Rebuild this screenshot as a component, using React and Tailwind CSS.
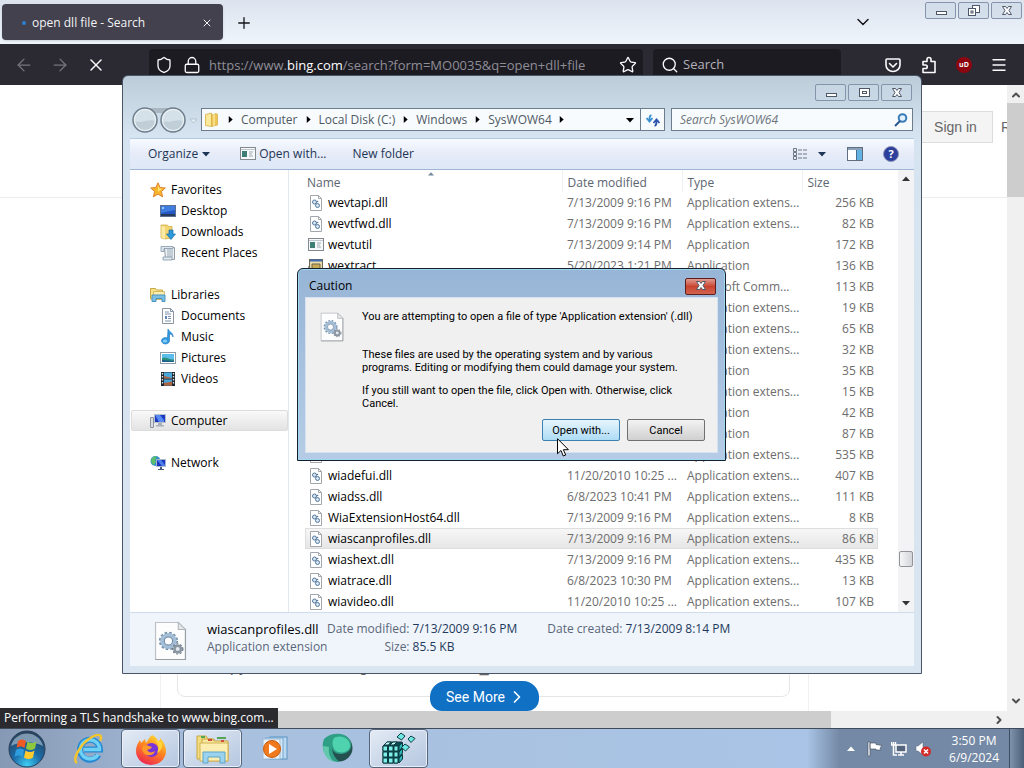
import {
  ArrowLeft,
  ArrowRight,
  ChevronDown,
  ChevronRight,
  ChevronUp,
  Lock,
  Menu,
  Plus,
  Search,
  Shield,
  Star,
  X,
} from 'lucide-react'

const files = [
  ['dll', 'wevtapi.dll', '7/13/2009 9:16 PM', 'Application extens...', '256 KB'],
  ['dll', 'wevtfwd.dll', '7/13/2009 9:16 PM', 'Application extens...', '82 KB'],
  ['exe', 'wevtutil', '7/13/2009 9:14 PM', 'Application', '172 KB'],
  ['cab', 'wextract', '5/20/2023 1:21 PM', 'Application', '136 KB'],
  ['exe', 'WF', '6/10/2009 1:38 PM', 'Microsoft Comm...', '113 KB'],
  ['dll', 'wfapigp.dll', '7/13/2009 9:16 PM', 'Application extens...', '19 KB'],
  ['dll', 'WfHC.dll', '7/13/2009 9:16 PM', 'Application extens...', '65 KB'],
  ['dll', 'whealogr.dll', '7/13/2009 9:16 PM', 'Application extens...', '32 KB'],
  ['exe', 'where', '7/13/2009 9:14 PM', 'Application', '35 KB'],
  ['dll', 'whhelper.dll', '7/13/2009 9:16 PM', 'Application extens...', '15 KB'],
  ['exe', 'whoami', '7/13/2009 9:14 PM', 'Application', '42 KB'],
  ['exe', 'wiaacmgr', '7/13/2009 9:14 PM', 'Application', '87 KB'],
  ['dll', 'wiaaut.dll', '7/13/2009 9:16 PM', 'Application extens...', '535 KB'],
  ['dll', 'wiadefui.dll', '11/20/2010 10:25 ...', 'Application extens...', '407 KB'],
  ['dll', 'wiadss.dll', '6/8/2023 10:41 PM', 'Application extens...', '111 KB'],
  ['dll', 'WiaExtensionHost64.dll', '7/13/2009 9:16 PM', 'Application extens...', '8 KB'],
  ['dll', 'wiascanprofiles.dll', '7/13/2009 9:16 PM', 'Application extens...', '86 KB'],
  ['dll', 'wiashext.dll', '7/13/2009 9:16 PM', 'Application extens...', '435 KB'],
  ['dll', 'wiatrace.dll', '6/8/2023 10:30 PM', 'Application extens...', '13 KB'],
  ['dll', 'wiavideo.dll', '11/20/2010 10:25 ...', 'Application extens...', '107 KB'],
]

const places = [
  { label: 'Favorites', icon: <FavoritesIcon />, items: [['Desktop', <DesktopIcon />], ['Downloads', <DownloadsIcon />], ['Recent Places', <RecentIcon />]] },
  { label: 'Libraries', icon: <LibrariesIcon />, items: [['Documents', <DocumentsIcon />], ['Music', <MusicIcon />], ['Pictures', <PicturesIcon />], ['Videos', <VideosIcon />]] },
  { label: 'Computer', icon: <ComputerIcon />, items: [], selected: true },
  { label: 'Network', icon: <NetworkIcon />, items: [] },
]

function FavoritesIcon() {
  return (
    <svg className="size-4" viewBox="0 0 16 16">
      <path d="M8 .8l2.1 4.7 5.2.5-3.9 3.5 1.2 5.3L8 12.1l-4.6 2.7 1.2-5.3L.7 6l5.2-.5z" fill="#f9b52c" stroke="#d9822b" />
      <path d="M8 3l1.400 3.500 3 .3-4.400 3z" fill="#ffe27a" />
    </svg>
  )
}

function DesktopIcon() {
  return (
    <svg className="size-4" viewBox="0 0 16 16">
      <rect x=".5" y="2.500" width="15" height="11" fill="#2459c4" stroke="#5b6f8e" />
      <path d="M1 3h14v4L1 10z" fill="#3f7de0" />
      <rect x="1" y="11" width="14" height="2" fill="#27395c" />
      <rect x="2" y="4" width="2" height="2" fill="#9cc4f5" />
    </svg>
  )
}

function DownloadsIcon() {
  return (
    <svg className="size-4" viewBox="0 0 16 16">
      <path d="M1 1h6l2 1.500h3V14l-7 1-4-1z" fill="#f2d571" stroke="#c9a33b" strokeWidth=".7" />
      <path d="M5 3v12L1.500 14V2z" fill="#fbeaa5" />
      <path d="M9 6h4v4h2.500L11 15.500 6.500 10H9z" fill="#2c9ada" stroke="#1a6ba5" strokeWidth=".7" />
    </svg>
  )
}

function RecentIcon() {
  return (
    <svg className="size-4" viewBox="0 0 16 16">
      <path d="M4.500 2.500h10v12h-9z" fill="#eef2f5" stroke="#8f9ba6" />
      <path d="M7 5h6M7 7h6M7 9h6M7 11h6" stroke="#9aa9b7" />
      <path d="M1 1.500h12v2H4v3H1zM3 12h9v3H3z" fill="#dfe8ef" stroke="#8397a8" strokeWidth=".8" />
    </svg>
  )
}

function LibrariesIcon() {
  return (
    <svg className="size-4" viewBox="0 0 16 16">
      <path d="M.5 1.500h5l1 1.500h6v9H.5z" fill="#f7e38c" stroke="#c9a844" />
      <path d="M3.500 4.500h11v8h-11z" fill="#fbeeb0" stroke="#c9a844" strokeWidth=".7" />
      <path d="M2 14.500V8h13v6.500h-3v-3H6v3z" fill="#7cc0e6" stroke="#4a92c0" />
    </svg>
  )
}

function DocumentsIcon() {
  return (
    <svg className="size-4" viewBox="0 0 16 16">
      <path d="M2.500.5h8l3 3v12h-11z" fill="#fff" stroke="#8c96a0" />
      <path d="M10.500.5v3h3M5 4h4M5 6h6M8 8.500h3M8 10.500h3M5 13h6" stroke="#7c93ad" fill="none" />
      <path d="M5 8h2v3H5z" fill="#5c86b4" />
    </svg>
  )
}

function MusicIcon() {
  return (
    <svg className="size-4" viewBox="0 0 16 16">
      <path d="M8 0c1 3 5.500 3.500 5 8-.5-2-2-3-3.500-3L9.500 12a4 3.200 0 1 1-2-3z" fill="#2f9be2" stroke="#1d6fb4" strokeWidth=".6" />
      <ellipse cx="5" cy="12" rx="2.200" ry="1.500" fill="#86cbf5" />
    </svg>
  )
}

function PicturesIcon() {
  return (
    <svg className="size-4" viewBox="0 0 16 16">
      <rect x=".5" y="2.500" width="15" height="11" fill="#fff" stroke="#8e9aa5" />
      <rect x="2" y="4" width="12" height="8" fill="#5bbdec" />
      <path d="M2 8c4-2 7 2 12 1.500V12H2z" fill="#2b8f7b" />
      <path d="M2 10l12 1v1H2z" fill="#1d5f8c" />
    </svg>
  )
}

function VideosIcon() {
  return (
    <svg className="size-4" viewBox="0 0 16 16">
      <rect x="1" y="1" width="14" height="14" fill="#20262e" />
      <path d="M4 1.500h8v6H4zM4 8.500h8v6H4z" fill="#4ba6dc" />
      <path d="M4 5l8 2v.5H4zM4 12l8-1.500v4H4z" fill="#b0643c" />
      <path d="M2.500 2v12M13.500 2v12" stroke="#dfe8f0" strokeWidth="1.300" strokeDasharray="1.500 1.500" />
    </svg>
  )
}

function ComputerIcon() {
  return (
    <svg className="size-4" viewBox="0 0 16 16">
      <path d="M.5 4.500h3v10h-3z" fill="#d8dce2" stroke="#8d949e" />
      <path d="M4.500 1.500h11v8h-11z" fill="#1b39c4" stroke="#b6bfca" />
      <path d="M5 2h5l4 5v2H9z" fill="#5a8bf0" />
      <path d="M8 10h4v2h2v1.500H6V12h2z" fill="#a7afba" />
    </svg>
  )
}

function NetworkIcon() {
  return (
    <svg className="size-4" viewBox="0 0 16 16">
      <circle cx="5.500" cy="6" r="5" fill="#2e8bd0" />
      <path d="M2 3c2-2 4-2 5-1L5 5l1 2-2 3C2 9 1 7 1 5z" fill="#5cc06a" />
      <path d="M6.500 4.500h9v7h-9z" fill="#1a35bf" stroke="#aab8cd" />
      <path d="M7 5h4l4 5v1h-3z" fill="#4f7fe8" />
      <path d="M10 12h2v2h2v1H8v-1h2z" fill="#4b5a78" />
    </svg>
  )
}

function FolderIcon() {
  return (
    <svg className="size-4" viewBox="0 0 16 16">
      <path d="M1.500 2.500l6-1.500v13.500l-6-1z" fill="#fae89b" stroke="#d6ae45" strokeWidth=".8" />
      <path d="M7.500 3l5-1.500 1 1V13l-6 1.500z" fill="#eec654" stroke="#d6ae45" strokeWidth=".8" />
      <path d="M10 2v12" stroke="#fff3bf" />
    </svg>
  )
}

function DllIcon({ className }) {
  return (
    <svg className={className} viewBox="0 0 32 40" preserveAspectRatio="none">
      <path d="M1.500 1.500h22l7 7v30h-29z" fill="#fdfdfe" stroke="#bfc3c7" strokeWidth="1.200" />
      <path d="M1.500 38.500h29v-30" fill="none" stroke="#989da2" />
      <path d="M23.500 1.500v7h7z" fill="#e4e8eb" stroke="#b0b5ba" />
      <circle cx="14" cy="20" r="6" fill="none" stroke="#a3bed6" strokeWidth="4" />
      <circle cx="14" cy="20" r="8.500" fill="none" stroke="#7591ab" strokeWidth="1.600" strokeDasharray="2.500 2" />
      <circle cx="14" cy="20" r="4" fill="#fdfdfe" stroke="#6d8aa6" />
      <circle cx="23" cy="28" r="3.200" fill="#e3e9ee" stroke="#8995a1" strokeWidth="2.500" />
      <circle cx="23" cy="28" r="5" fill="none" stroke="#6f7b87" strokeWidth="1.200" strokeDasharray="2 1.600" />
    </svg>
  )
}

function ExeIcon() {
  return (
    <svg className="size-4" viewBox="0 0 16 16">
      <rect x=".5" y="1.500" width="15" height="12" fill="#f7f8f9" stroke="#84898f" />
      <path d="M1 3.500h14" stroke="#c0c9d2" />
      <rect x="2" y="5" width="5" height="6" fill="#3d7f75" />
      <path d="M9 6h4M9 8h3M9 10h4" stroke="#9eaab5" />
    </svg>
  )
}

function CabIcon() {
  return (
    <svg className="size-4" viewBox="0 0 16 16">
      <rect x="1.500" y="1.500" width="13" height="11" fill="#e9dba6" stroke="#6b6757" />
      <path d="M2 2.500h12" stroke="#3f6cb5" strokeWidth="2" />
      <path d="M4 6h8v8H4z" fill="#caa955" stroke="#6b6757" />
      <path d="M0 8v7h4" fill="none" stroke="#333" />
    </svg>
  )
}

function FileIcon({ kind }) {
  if (kind === 'exe') return <ExeIcon />
  if (kind === 'cab') return <CabIcon />
  return (
    <svg className="size-4" viewBox="0 0 16 16">
      <path d="M2.500.5h8l3 3v12h-11z" fill="#fff" stroke="#a2a7ac" />
      <path d="M10.500.5v3h3" fill="none" stroke="#a2a7ac" />
      <circle cx="6.500" cy="7" r="2" fill="#d7e6f3" stroke="#54789c" />
      <circle cx="9.500" cy="10.500" r="2" fill="#d7e6f3" stroke="#54789c" />
      <circle cx="9.500" cy="6.500" r=".8" fill="#54789c" />
    </svg>
  )
}

function Glyph({ kind }) {
  return (
    <svg className="h-3 w-4" viewBox="0 0 16 12" fill="#fff" stroke="#4d5768">
      {kind === 'min' && <rect x="3.500" y="6.500" width="10" height="3" />}
      {kind === 'max' && (
        <>
          <rect x="3.500" y="1.500" width="10" height="8" />
          <rect x="6.500" y="4.500" width="4" height="2" />
        </>
      )}
      {kind === 'restore' && (
        <>
          <rect x="6.500" y=".5" width="7" height="7" />
          <rect x="2.500" y="3.500" width="7" height="7" />
          <rect x="5" y="6" width="2" height="2" />
        </>
      )}
      {kind === 'close' && <path d="M3.500 1.500h3l1.500 2 1.500-2h3L10 5.500l2.500 4h-3L8 7.500l-1.500 2h-3L6 5.500z" />}
    </svg>
  )
}

function WindowButtons({ middle }) {
  return (
    <div className="flex gap-0.5">
      {['min', middle, 'close'].map((kind) => (
        <button
          key={kind}
          aria-label={kind}
          className="flex h-[17px] w-[31px] items-center justify-center rounded-xs border border-[#8494ac] bg-[#ccd8e8]/60"
        >
          <Glyph kind={kind} />
        </button>
      ))}
    </div>
  )
}

function Triangle({ className, d }) {
  return (
    <svg className={className} viewBox="0 0 8 8" fill="currentColor">
      <path d={d} />
    </svg>
  )
}

const down = 'M0 2h8L4 6.500z'
const up = 'M0 6h8L4 1.500z'
const right = 'M2 0v8l4.500-4z'

function Browser() {
  return (
    <div className="flex min-h-0 flex-1 flex-col">
      <div className="flex h-11 items-start bg-linear-to-b from-[#dde3ee] to-[#eef5fb]">
        <div className="mt-1 ml-0.5 flex h-9 w-[221px] items-center rounded bg-[#42414d] pt-0.5 pr-2 pl-5 text-xs text-[#f3f3f6] shadow">
          <span className="mr-1.5 size-1 rounded-full bg-[#2f7fd0]" />
          <span className="flex-1">open dll file - Search</span>
          <button aria-label="Close tab" className="p-0.5">
            <X className="size-3" strokeWidth={2} />
          </button>
        </div>
        <button aria-label="New tab" className="mt-3.5 ml-3 text-[#15141a]">
          <Plus className="size-[18px]" strokeWidth={1.75} />
        </button>
        <button aria-label="List all tabs" className="mt-3 mr-[52px] ml-auto text-[#15141a]">
          <ChevronDown className="size-5" strokeWidth={1.75} />
        </button>
        <div className="mt-0.5 mr-0.5">
          <WindowButtons middle="restore" />
        </div>
      </div>

      <div className="flex h-[41px] items-center bg-[#2b2a33] text-[#fbfbfe]">
        <div className="flex w-[149px] gap-4 pl-3.5">
          <ArrowLeft className="size-5 text-[#77767e]" strokeWidth={1.5} />
          <ArrowRight className="size-5 text-[#77767e]" strokeWidth={1.5} />
          <X className="size-5" strokeWidth={1.75} />
        </div>
        <div className="flex h-8 min-w-0 flex-1 items-center gap-2 rounded-sm bg-[#1c1b22] px-1.5">
          <Shield className="size-[18px]" strokeWidth={1.75} />
          <Lock className="ml-0.5 size-[18px]" strokeWidth={1.75} />
          <span className="flex-1 truncate text-[13px]/5 text-[#8f8e97]">
            https://www.<span className="text-[#fbfbfe]">bing.com</span>/search?form=MO0035&amp;q=open+dll+file
          </span>
          <Star className="size-[18px]" strokeWidth={1.75} />
        </div>
        <label className="ml-2.5 flex h-8 w-[188px] items-center gap-1 rounded-sm bg-[#1c1b22] pl-2">
          <Search className="size-[18px]" strokeWidth={1.75} />
          <input aria-label="Search the web" placeholder="Search" className="w-32 text-[13px] outline-none placeholder:text-[#b3b2ba]" />
        </label>
        <div className="ml-[43px] flex items-center gap-[18px] pr-4">
          <svg className="size-[18px]" viewBox="0 0 18 18" fill="none" stroke="currentColor" strokeWidth="1.600" strokeLinecap="round" strokeLinejoin="round">
            <path d="M3 3h12a1 1 0 0 1 1 1v5a7 6.500 0 0 1-14 0V4a1 1 0 0 1 1-1zM5.500 7.500L9 11l3.500-3.500" />
          </svg>
          <svg className="size-[18px]" viewBox="0 0 18 18" fill="none" stroke="currentColor" strokeWidth="1.600" strokeLinejoin="round">
            <path d="M3 16.500v-4h2.500a1.700 1.700 0 0 0 0-3.500H3V5.500h4V3.500a2 2 0 0 1 4 0v2h4v11z" />
          </svg>
          <span className="flex size-4 items-center justify-center rounded-full bg-[#8c0610] text-[7px] font-bold">uD</span>
          <Menu className="size-[18px]" strokeWidth={1.75} />
        </div>
      </div>

      <div className="flex min-h-0 flex-1 bg-white">
        <div className="flex min-w-0 flex-1 flex-col overflow-hidden font-['Liberation_Sans',Arial,sans-serif]">
          <div className="flex h-[113px] items-start justify-end border-b border-[#ececec] pt-[26px]">
            <a href="#signin" className="flex h-8 w-[75px] items-center justify-center border border-[#dcdcdc] bg-[#f4f4f4] text-sm text-[#666]">
              Sign in
            </a>
            <span className="ml-2 w-1.5 overflow-hidden text-sm leading-8 text-[#666]">R</span>
          </div>
          <div className="flex min-h-0 flex-1">
            <div className="w-[161px] border-r border-[#f1f1f1]" />
            <div className="flex flex-1 flex-col pr-[18px] pl-4">
              <div className="flex flex-1 items-end gap-28 rounded-lg border border-[#e6e6e6] pb-[19px] pl-[52px] text-base leading-5 text-[#666]">
                <span>py</span>
                <span>g</span>
                <span>_</span>
              </div>
              <div className="-mt-4 flex justify-center pl-0.5">
                <button className="flex h-[30px] w-[109px] items-center justify-center gap-0.5 rounded-t-2xl rounded-b-xl bg-[#1070c4] pt-0.5 pl-1 font-['Roboto',sans-serif] text-sm text-white">
                  See More
                  <ChevronRight className="size-5" strokeWidth={2} />
                </button>
              </div>
            </div>
            <div className="w-[199px] border-l border-[#f1f1f1]" />
          </div>
        </div>
        <div className="flex w-[17px] flex-col items-center bg-[#f0f0f0] py-1 text-[#505050]">
          <ChevronUp className="size-3" strokeWidth={4} />
          <div className="mt-0.5 h-[94px] w-full bg-[#cdcdcd]" />
          <ChevronDown className="mt-auto size-3" strokeWidth={4} />
        </div>
      </div>
      <div className="flex h-[17px] items-center bg-[#f0f0f0] text-[#505050]">
        <div className="h-full flex-1 bg-[#cdcdcd]" />
        <div className="flex w-[193px] justify-end pr-[19px]">
          <ChevronRight className="size-3" strokeWidth={4} />
        </div>
      </div>
    </div>
  )
}

function AddressBar() {
  return (
    <div className="flex h-[23px] items-center pr-px pl-0.5">
      <svg className="h-7 w-[69px] shrink-0" viewBox="0 0 69 28">
        <path d="M14 2h28v5H14z" fill="#a9b7c2" />
        <circle cx="13" cy="14" r="12" fill="#d5e1e9" stroke="#6f7e8c" strokeWidth="1.500" />
        <circle cx="41" cy="14" r="12" fill="#d5e1e9" stroke="#6f7e8c" strokeWidth="1.500" />
        <path d="M3 15a10 10 0 0 0 20 0c-6-3-14 3-20 0zM31 15a10 10 0 0 0 20 0c-6-3-14 3-20 0z" fill="#c0ced8" />
        <circle cx="13" cy="14" r="10.500" fill="none" stroke="#edf4f8" />
        <circle cx="41" cy="14" r="10.500" fill="none" stroke="#edf4f8" />
        <path d="M58 13h7l-3.500 4z" fill="#e4edf3" stroke="#a8b8c5" strokeWidth=".7" />
      </svg>
      <div className="flex h-full min-w-0 flex-1 items-center border border-[#6c7c8c] bg-[#f8fbfd] text-[#4f5963]">
        <span className="pl-0.5">
          <FolderIcon />
        </span>
        {['Computer', 'Local Disk (C:)', 'Windows', 'SysWOW64'].map((part) => (
          <span key={part} className="flex items-center">
            <Triangle className="mx-[7px] size-[7px] text-black" d={right} />
            {part}
          </span>
        ))}
        <Triangle className="mx-1.5 size-[7px] text-black" d={right} />
        <Triangle className="mr-1.5 ml-auto size-2 text-black" d={down} />
        <button aria-label="Refresh" className="flex h-full w-6 items-center justify-center border-l border-[#6c7c8c]">
          <svg className="size-4" viewBox="0 0 16 16" fill="none" strokeWidth="1.800">
            <path d="M6.500 3C4.500 3.500 4.500 5 4.500 8.500M1.500 6l3 3.500 3-3.500" stroke="#3b8fd0" />
            <path d="M9.500 14c2-.5 2-2 2-5.500M8.500 11l3-3.500 3 3.500" stroke="#2b55ab" />
          </svg>
        </button>
      </div>
      <label className="ml-1.5 flex h-full w-[242px] items-center border border-[#6c7c8c] bg-[#f8fbfd] pr-1 pl-2">
        <input aria-label="Search SysWOW64" placeholder="Search SysWOW64" className="min-w-0 flex-1 italic outline-none placeholder:text-[#6d747b]" />
        <svg className="size-3.5" viewBox="0 0 14 14" fill="none" stroke="#3a7cb8" strokeWidth="2">
          <circle cx="8.500" cy="5" r="3.800" fill="#e2f1fb" />
          <path d="M6 8l-5 5" stroke="#27568f" />
        </svg>
      </label>
    </div>
  )
}

function CommandBar() {
  return (
    <div className="flex h-8 items-center border-t border-b border-t-[#b6cadf] border-b-[#9fb6d4] bg-linear-to-b from-[#f7faff] via-[#e6ebf8] to-[#dde8f7] pr-[15px] pl-[18px] text-[#1e3656]">
      <button className="flex items-center gap-1">
        Organize <Triangle className="size-2" d={down} />
      </button>
      <button className="ml-[30px] flex items-center gap-[3px]">
        <ExeIcon /> Open with...
      </button>
      <button className="ml-[26px]">New folder</button>
      <button aria-label="Change your view" className="ml-auto flex items-center gap-2.5">
        <svg className="size-4" viewBox="0 0 16 16" fill="none" stroke="#6c7784">
          <path d="M1.500 2.500h3v3h-3zM1.500 6.500h3v3h-3zM1.500 10.500h3v3h-3z" />
          <path d="M6 4h4M11 4h4M6 8h4M11 8h4M6 12h4M11 12h4" />
        </svg>
        <Triangle className="size-2" d={down} />
      </button>
      <button aria-label="Show the preview pane" className="ml-[21px]">
        <svg className="size-4" viewBox="0 0 16 16">
          <rect x=".5" y="1.500" width="15" height="13" fill="#fff" stroke="#5f6f80" />
          <path d="M1 3h14" stroke="#8aa0b8" strokeWidth="2" />
          <rect x="10" y="4" width="5" height="10" fill="#63b3e2" />
          <path d="M9.500 4v10" stroke="#4a6d90" />
        </svg>
      </button>
      <button aria-label="Get help" className="ml-5 flex size-4 items-center justify-center rounded-full border border-[#8b93b8] bg-[#2c3f9c] text-[11px] font-bold text-white">
        ?
      </button>
    </div>
  )
}

function NavigationPane() {
  return (
    <nav className="w-[159px] shrink-0 space-y-[21px] border-r border-[#e3e8f0] pt-[9px]">
      {places.map((group) => (
        <ul key={group.label}>
          <li
            className={
              group.selected
                ? 'ml-px flex h-[21px] items-center gap-[5px] rounded-xs border border-[#dcdcdc] bg-linear-to-b from-[#f9f9f9] to-[#e3e3e3] pl-[18px]'
                : 'flex h-[21px] items-center gap-[5px] pl-5'
            }
          >
            {group.icon}
            {group.label}
          </li>
          {group.items.map(([label, icon]) => (
            <li key={label} className="flex h-[21px] items-center gap-[5px] pl-[30px]">
              {icon}
              {label}
            </li>
          ))}
        </ul>
      ))}
    </nav>
  )
}

function FileList() {
  return (
    <table className="min-w-0 flex-1 table-fixed border-collapse text-left whitespace-nowrap text-[#6d6d6d]">
      <thead>
        <tr className="h-[22px] text-[#5c6570]">
          <th className="border-r border-[#eef0f4] p-0 pt-1 pl-0.5 font-normal">
            <div className="flex">
              Name
              <Triangle className="-mt-1 ml-[87px] size-1.5 text-[#73899c]" d={up} />
            </div>
          </th>
          <th className="w-[120px] border-r border-[#eef0f4] p-0 pt-1 pl-[5px] font-normal">Date modified</th>
          <th className="w-[120px] border-r border-[#eef0f4] p-0 pt-1 pl-[5px] font-normal">Type</th>
          <th className="w-[76px] p-0 pt-1 pl-[5px] font-normal">Size</th>
        </tr>
      </thead>
      <tbody>
        {files.map(([kind, name, date, type, size]) => (
          <tr
            key={name}
            className={
              name === 'wiascanprofiles.dll'
                ? 'h-[21px] bg-linear-to-b from-[#f8f8f8] to-[#e5e5e5] outline outline-[#dedede] -outline-offset-1'
                : 'h-[21px]'
            }
          >
            <td className="p-0 pl-[3px]">
              <span className="flex items-center gap-1 text-black">
                <FileIcon kind={kind} />
                {name}
              </span>
            </td>
            <td className="p-0 pl-[5px]">{date}</td>
            <td className="p-0 pl-[5px]">{type}</td>
            <td className="p-0 pr-1 text-right">{size}</td>
          </tr>
        ))}
      </tbody>
    </table>
  )
}

function Explorer() {
  return (
    <section className="absolute top-[75px] right-[102px] bottom-[54px] left-[122px] flex flex-col rounded-t-md border border-[#4a5568] bg-linear-to-b from-[#bccdd9] via-[#d5e4f0] via-10% to-[#d9e5f0] px-[7px] pb-[7px] leading-4">
      <div className="flex h-8 justify-end pt-2 pr-0.5">
        <WindowButtons middle="max" />
      </div>
      <AddressBar />
      <div className="mt-[7px]">
        <CommandBar />
      </div>
      <div className="flex min-h-0 flex-1 overflow-hidden bg-white">
        <NavigationPane />
        <div className="flex min-w-0 flex-1 items-start pl-4">
          <FileList />
        </div>
        <div className="ml-5 flex w-4 flex-col items-center bg-[#f3f3f5] py-[5px] text-[#333]">
          <Triangle className="size-2" d={up} />
          <div className="mt-auto h-4 w-3.5 rounded-xs border border-[#8f9296] bg-linear-to-r from-[#f6f6f6] to-[#d3d5d8]" />
          <Triangle className="mt-8 size-2" d={down} />
        </div>
      </div>
      <footer className="flex h-[54px] items-start border-t border-[#cfdcea] bg-[#f0f5fc] pt-2 pl-6 text-[#5a6779]">
        <DllIcon className="h-10 w-[33px]" />
        <div className="ml-5 w-[120px] space-y-0.5 whitespace-nowrap">
          <p className="text-[13px]/4 text-black">wiascanprofiles.dll</p>
          <p>Application extension</p>
        </div>
        <dl className="grid grid-cols-[auto_auto] gap-x-[3px] gap-y-0.5">
          <dt className="text-right">Date modified:</dt>
          <dd className="text-[#1e395b]">7/13/2009 9:16 PM</dd>
          <dt className="text-right">Size:</dt>
          <dd className="text-[#1e395b]">85.5 KB</dd>
        </dl>
        <dl className="ml-[30px] flex gap-[3px]">
          <dt>Date created:</dt>
          <dd className="text-[#1e395b]">7/13/2009 8:14 PM</dd>
        </dl>
      </footer>
    </section>
  )
}

function CautionDialog() {
  return (
    <section
      role="dialog"
      aria-label="Caution"
      className="absolute top-[268px] left-[297px] w-[429px] rounded-t-md border border-[#16202c] bg-linear-to-b from-[#97b5d6] to-[#b6cce6] px-[7px] pb-[7px] shadow-[inset_0_0_0_1px_#9fd6f0]"
    >
      <header className="flex h-7 items-center justify-between pt-1.5 pl-1 text-xs">
        <h2>Caution</h2>
        <button
          aria-label="Close"
          className="mr-0.5 flex h-[17px] w-[31px] items-center justify-center rounded-xs border border-[#5b1d1d] bg-linear-to-b from-[#e09a90] via-[#c8432f] to-[#d3634e]"
        >
          <Glyph kind="close" />
        </button>
      </header>
      <div className="border border-[#d6e2f0] bg-[#f0f0f0] px-3 pt-2.5 pb-[11px] font-['Roboto','DejaVu_Sans_Condensed',sans-serif] text-[11px] leading-[13px]">
        <div className="flex items-start gap-[18px]">
          <DllIcon className="mt-1 ml-0.5 h-[30px] w-6 shrink-0" />
          <div className="whitespace-nowrap">
            <p className="pt-0.5">You are attempting to open a file of type 'Application extension' (.dll)</p>
            <p className="mt-[25px]">
              These files are used by the operating system and by various
              <br />
              programs. Editing or modifying them could damage your system.
            </p>
            <p className="mt-2.5">
              If you still want to open the file, click Open with. Otherwise, click
              <br />
              Cancel.
            </p>
          </div>
        </div>
        <div className="mt-[9px] flex justify-end gap-[7px]">
          <button className="h-[22px] w-[78px] rounded-xs border border-[#3c7fb1] bg-linear-to-b from-[#e6f5fd] to-[#aedcf5]">Open with...</button>
          <button className="h-[22px] w-[78px] rounded-xs border border-[#707070] bg-linear-to-b from-[#f3f3f3] to-[#d0d0d0]">Cancel</button>
        </div>
      </div>
    </section>
  )
}

function StartOrb() {
  return (
    <svg className="size-[38px]" viewBox="0 0 38 38">
      <defs>
        <radialGradient id="orb" cx=".5" cy=".95" r=".9">
          <stop offset="0" stopColor="#3fd0f5" />
          <stop offset=".45" stopColor="#1b6ba8" />
          <stop offset="1" stopColor="#29435f" />
        </radialGradient>
      </defs>
      <circle cx="19" cy="19" r="18" fill="url(#orb)" stroke="#2a3f58" />
      <path d="M3 16a16.500 16.500 0 0 1 32 0c-10-5-22-5-32 0z" fill="#b7cbdc" opacity=".6" />
      <path d="M10 11c3-2 5-2 8 0l-1.500 7c-3-2-5-2-8 0z" fill="#ef5a25" />
      <path d="M19.500 11.500c3 2 6 2 9 0L27 18.500c-3 2-6 2-9 0z" fill="#8fc73e" />
      <path d="M8 20c3-2 5-2 8 0l-1.500 7c-3-2-5-2-8 0z" fill="#2d9de0" />
      <path d="M17.500 20.500c3 2 6 2 9 0L25 27.500c-3 2-6 2-9 0z" fill="#fcc92e" />
    </svg>
  )
}

function ExplorerEIcon() {
  return (
    <svg className="size-8" viewBox="0 0 32 32" fill="none">
      <path d="M25.500 22a10 10 0 1 1 1.500-5.500H11" stroke="#2489d2" strokeWidth="6" />
      <path d="M25 21.500a9.500 9.500 0 1 1 1.500-5H11" stroke="#6fd0f5" strokeWidth="3.500" />
      <path d="M4 30C-2 27 8 10 19 4c7-4 11-2 8 4" stroke="#f2c52e" strokeWidth="2.500" />
    </svg>
  )
}

function FirefoxIcon() {
  return (
    <svg className="size-8" viewBox="0 0 32 32">
      <defs>
        <linearGradient id="fox" x1=".8" y1="0" x2=".3" y2="1">
          <stop offset="0" stopColor="#ffe236" />
          <stop offset=".45" stopColor="#ff8a1f" />
          <stop offset="1" stopColor="#ee2550" />
        </linearGradient>
      </defs>
      <path d="M17 2c4 2 5 4 6 6 2 0 2-2 2-3 3 3 6 8 6 13a15 14 0 0 1-30 0c0-5 2-8 4-11l1 3 4-4 1 4c2-3 3-5 6-8z" fill="url(#fox)" />
      <circle cx="16.500" cy="17" r="7" fill="#7a35d8" />
      <path d="M8 13c4-2 6 0 9 1-1 2-3 2-5 3 2 3 5 3 8 1-1 6-12 6-13-2z" fill="#ff9a2a" />
      <path d="M18 5c5 4 7 9 4 15 4-2 6-6 5-11-3-1-5-1-9-4z" fill="#ffd43a" />
    </svg>
  )
}

function FoldersIcon() {
  return (
    <svg className="h-[30px] w-9" viewBox="0 0 36 30">
      <path d="M2 2h9l2 3h6v20H2z" fill="#f4dd7e" stroke="#c9a544" />
      <path d="M7 5h10l2 2h14v20H7z" fill="#f9e79b" stroke="#c9a544" />
      <path d="M5 9h28v18H5z" fill="#fbeeb0" stroke="#d2b256" />
      <path d="M6 3h4M22 4h9" stroke="#53a653" strokeWidth="2" />
      <path d="M13 6h4M26 7h3" stroke="#cf4a37" strokeWidth="2" />
      <path d="M8 29V18h22v11h-5v-6H13v6z" fill="#9bd3ee" stroke="#5ea3c9" />
    </svg>
  )
}

function MediaIcon() {
  return (
    <svg className="size-7" viewBox="0 0 28 28">
      <rect x="9" y="2" width="17" height="22" fill="#bcd9ef" stroke="#5d94c4" />
      <rect x="5" y="3" width="17" height="21" fill="#d7e9f6" stroke="#6ea3cf" />
      <rect x="2" y="4" width="17" height="20" fill="#e8f1f8" stroke="#9dbcd6" />
      <circle cx="11" cy="14" r="8.500" fill="#f07a1c" stroke="#cb5c0b" />
      <path d="M8 9l8 5-8 5z" fill="#fff" />
    </svg>
  )
}

function SwirlIcon() {
  return (
    <svg className="size-8" viewBox="0 0 32 32">
      <circle cx="18" cy="15" r="13.500" fill="#24514f" />
      <path d="M3 6C10-1 24-1 29 7c4 8-2 14-9 14-6 0-9-3-9-8 0 6 2 12 8 16C8 30-2 18 3 6z" fill="#2f9f86" />
      <path d="M13 5c7-4 16 0 16 8-1 7-12 9-16 3-2-4-2-8 0-11z" fill="#4fd3ae" />
      <path d="M2 13c0 8 4 14 11 16-4-4-6-9-5-15z" fill="#62c9ad" />
    </svg>
  )
}

function RegistryIcon() {
  return (
    <svg className="h-[34px] w-9" viewBox="0 0 36 34" stroke="#0b3b40" strokeLinejoin="round">
      <path d="M2 14l4-4h15v11L17 31H2z" fill="#0d4a50" />
      {[14, 20, 26].map((y) => (
        <g key={y} fill="#7ff0ea">
          <path d={`M2 ${y}h4.500v5H2z`} />
          <path d={`M7.500 ${y}H12v5H7.500z`} />
          <path d={`M13 ${y}h4v5h-4z`} />
          <path d={`M18 ${y}l3.500-3.500v4.500L18 ${y + 5}z`} fill="#2fb5b5" />
        </g>
      ))}
      <path d="M3 13l3-3h4l-2.500 3zM9 13l3-3h4l-3 3z" fill="#c6fbf8" />
      <path d="M20 1l4 3-3.500 4L16 5zM30 4l4 2.500-4 4-3-3.500zM24 12l4.500 3-4 4-4-3.500z" fill="#6fe8e3" />
    </svg>
  )
}

const tasks = [
  ['Internet Explorer', <ExplorerEIcon />, false],
  ['Firefox', <FirefoxIcon />, true],
  ['Windows Explorer', <FoldersIcon />, true],
  ['Media Player', <MediaIcon />, false],
  ['Dolphin', <SwirlIcon />, false],
  ['Registry Editor', <RegistryIcon />, true],
]

function Taskbar() {
  return (
    <footer className="flex h-10 shrink-0 items-stretch border-t border-[#3f4a5a] bg-linear-to-r from-[#8699b4] via-[#a9c0de] via-20% to-[#a9c4e6] to-80%">
      <button aria-label="Start" className="flex w-[59px] items-center pl-2">
        <StartOrb />
      </button>
      <div className="flex gap-[3px]">
        {tasks.map(([label, icon, open]) => (
          <button
            key={label}
            aria-label={label}
            className={
              open
                ? 'flex w-[59px] items-center justify-center rounded-sm border border-[#55657c] bg-linear-to-br from-[#e4ebf5] to-[#b4c6df] shadow-[inset_0_0_0_1px_#e8eff8]'
                : 'flex w-[59px] items-center justify-center'
            }
          >
            {icon}
          </button>
        ))}
      </div>
      <div className="ml-auto flex items-center bg-linear-to-r from-[#a9c4e6] to-[#7489a5] to-15% pl-10 text-white">
        <Triangle className="mr-3 size-2" d={up} />
        <svg className="mr-2 size-4" viewBox="0 0 16 16" fill="#fff" stroke="#3c4a5c" strokeWidth=".6">
          <path d="M1 1h2v14H1zM3 2h6v1.500l6 1-2 2.500 1 2H9V8H3z" />
        </svg>
        <svg className="mr-2 size-4" viewBox="0 0 16 16" fill="none" stroke="#fff" strokeWidth="1.500">
          <path d="M5 4h10v7H5z" fill="#53647c" />
          <path d="M7 14h6M10 11v3M2.500 1v4M.5 1v3h4V1M2.500 5v9H6" />
        </svg>
        <svg className="mr-[18px] size-4" viewBox="0 0 16 16">
          <path d="M1 5h2l5-4v13L3 10H1z" fill="#fff" stroke="#56647a" strokeWidth=".5" />
          <circle cx="11" cy="10.500" r="5" fill="#d42a2a" />
          <path d="M9 8.500l4 4M13 8.500l-4 4" stroke="#fff" strokeWidth="1.500" />
        </svg>
        <div className="text-center text-xs leading-[17px]">
          <p>3:50 PM</p>
          <p>6/9/2024</p>
        </div>
        <div className="ml-2.5 h-full w-[15px] border-l border-[#3e4d63] bg-linear-to-r from-[#8093ac] to-[#4c5f78]" />
      </div>
    </footer>
  )
}

export default function App() {
  return (
    <main className="relative flex h-screen flex-col overflow-hidden font-['Open_Sans','Noto_Sans',sans-serif] text-xs text-black">
      <div className="relative flex min-h-0 flex-1 flex-col">
        <Browser />
        <p className="absolute bottom-0 left-0 bg-[#2b2a2f] px-1 py-0.5 leading-4 text-white">Performing a TLS handshake to www.bing.com...</p>
        <Explorer />
        <CautionDialog />
        <svg className="absolute top-[438px] left-[557px] h-[19px] w-3" viewBox="0 0 12 19">
          <path d="M.5.700v15l3.500-3.200 2.300 5.500 2.400-1-2.300-5.300h5z" fill="#fff" stroke="#000" />
        </svg>
      </div>
      <Taskbar />
    </main>
  )
}
